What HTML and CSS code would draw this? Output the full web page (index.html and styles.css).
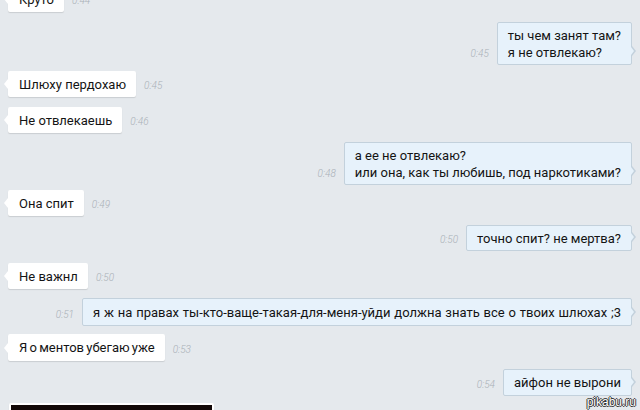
FILE: index.html
```html
<!DOCTYPE html>
<html>
<head>
<meta charset="utf-8">
<link rel="stylesheet" href="styles.css">
</head>
<body>
<div class="chat">
  <div class="row in first">
    <div class="bubble">Круто</div>
    <span class="time">0:44</span>
  </div>
  <div class="row out r1">
    <span class="time">0:45</span>
    <div class="bubble">ты чем занят там?<br>я не отвлекаю?</div>
  </div>
  <div class="row in r2">
    <div class="bubble">Шлюху пердохаю</div>
    <span class="time">0:45</span>
  </div>
  <div class="row in r3">
    <div class="bubble">Не отвлекаешь</div>
    <span class="time">0:46</span>
  </div>
  <div class="row out r4">
    <span class="time">0:48</span>
    <div class="bubble">а ее не отвлекаю?<br>или она, как ты любишь, под наркотиками?</div>
  </div>
  <div class="row in r5">
    <div class="bubble">Она спит</div>
    <span class="time">0:49</span>
  </div>
  <div class="row out r6">
    <span class="time">0:50</span>
    <div class="bubble">точно спит? не мертва?</div>
  </div>
  <div class="row in r7">
    <div class="bubble">Не важнл</div>
    <span class="time">0:50</span>
  </div>
  <div class="row out r8">
    <span class="time">0:51</span>
    <div class="bubble">я ж на правах ты-кто-ваще-такая-для-меня-уйди должна знать все о твоих шлюхах ;3</div>
  </div>
  <div class="row in r9">
    <div class="bubble">Я о ментов убегаю уже</div>
    <span class="time">0:53</span>
  </div>
  <div class="row out r10">
    <span class="time">0:54</span>
    <div class="bubble">айфон не вырони</div>
  </div>
  <div class="row in r11">
    <div class="bubble photo"><div class="pic"></div></div>
  </div>
</div>
<div class="watermark">pikabu.ru</div>
</body>
</html>
```
FILE: styles.css
```css
html, body {
  margin: 0;
  padding: 0;
  width: 640px;
  height: 410px;
  overflow: hidden;
  background: #e5e9ed;
  font-family: Roboto, "Noto Sans", sans-serif;
}
.chat {
  display: flex;
  flex-direction: column;
  padding: 0 8px 0 8px;
  margin-top: -14px;
}
.row {
  display: flex;
  align-items: flex-end;
  gap: 8px;
}
.row.out {
  justify-content: flex-end;
}
.bubble {
  position: relative;
  background: #ffffff;
  color: #141414;
  font-size: 13px;
  line-height: 17px;
  padding: 5px 10px 4px 11px;
  border-radius: 2px;
  box-shadow: 0 1px 1px rgba(0,0,0,0.12);
}
.out .bubble {
  background: #e7f2fb;
  border: 1px solid #c3d1dc;
  padding: 4px 10px 3px 10px;
  box-shadow: none;
}
.bubble::before {
  content: "";
  position: absolute;
  bottom: 8px;
  width: 0;
  height: 0;
  border-top: 5px solid transparent;
  border-bottom: 5px solid transparent;
}
.in .bubble::before {
  left: -4px;
  border-right: 4px solid #ffffff;
}
.out .bubble::before {
  right: -5px;
  border-left: 4px solid #c3d1dc;
}
.out .bubble::after {
  content: "";
  position: absolute;
  bottom: 9px;
  right: -3px;
  width: 0;
  height: 0;
  border-top: 4px solid transparent;
  border-bottom: 4px solid transparent;
  border-left: 3px solid #e7f2fb;
}
.time {
  font-size: 10px;
  font-style: italic;
  color: #a9b0b7;
  padding-bottom: 6px;
  font-weight: 300;
}
.r1 { margin-top: 10px; }
.r2 { margin-top: 6px; }
.r3 { margin-top: 10px; }
.r4 { margin-top: 9px; }
.r5 { margin-top: 5px; }
.r6 { margin-top: 9px; }
.r7 { margin-top: 12px; }
.r8 { margin-top: 9px; }
.r8 .bubble { padding-top: 5px; padding-bottom: 4px; word-spacing: 0.6px; }
.r9 { margin-top: 8px; }
.r9 .bubble { padding-bottom: 5px; word-spacing: -1px; }
.r10 { margin-top: 8px; }
.r10 .bubble { padding-bottom: 4px; }
.r11 { margin-top: 7px; }
.photo {
  padding: 2px 2px 2px 2px;
  margin-left: 1px;
}
.pic {
  width: 201px;
  height: 40px;
  background: #120807;
}
.watermark {
  position: absolute;
  right: 4px;
  bottom: 1px;
  font-family: "Liberation Sans", Arial, sans-serif;
  font-size: 12px;
  color: #ffffff;
  text-shadow: -1px 0 #333, 1px 0 #333, 0 -1px #333, 0 1px #333;
}
```
